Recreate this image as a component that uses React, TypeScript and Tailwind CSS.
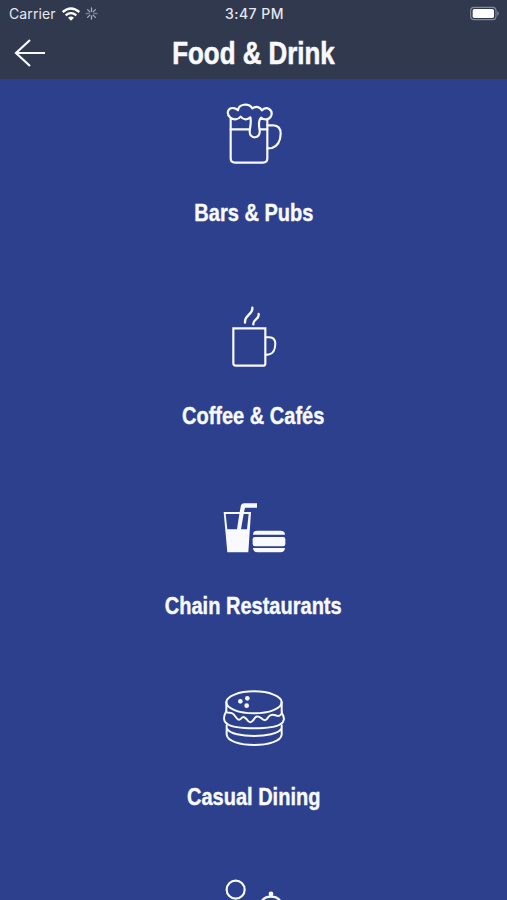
import type { ReactNode } from 'react';

const stroke = {
  fill: 'none',
  stroke: 'currentColor',
  strokeWidth: 6.5,
  strokeLinecap: 'round' as const,
  strokeLinejoin: 'round' as const,
};

function BeerIcon() {
  return (
    <svg viewBox="0 0 240 240" className="mr-px h-20 w-20" {...stroke}>
      <path d="M53 72V190Q53 203 66 203H150Q163 203 163 190V72" />
      <path d="M53 103H110M141 103H163" />
      <path d="M163 91H181Q203 92 203 116Q202 150 177 159L163 160" />
      <path d="M112 67C103 76 91 75 83 65C75 75 61 76 51 67C38 54 46 35 65 40Q72 43 75 46C77 26 107 23 118 40C130 32 141 36 147 46C161 32 180 44 175 61C170 76 153 76 144 68C134 78 138 92 140 107C143 132 110 134 110 110C111 93 116 82 112 67Z" />
    </svg>
  );
}

function CoffeeIcon() {
  return (
    <svg viewBox="0 0 240 240" className="mr-px h-20 w-20" {...stroke}>
      <path d="M61 100H157V206Q157 212 150 212H68Q61 212 61 205Z" strokeLinejoin="miter" />
      <path d="M158 127H169Q187 128 187 147Q186 174 169 178L158 180" strokeWidth="6" />
      <path d="M118 38C121 60 94 58 96 83M137 57C140 73 119 73 121 88" strokeWidth="7" />
    </svg>
  );
}

function ChainIcon() {
  return (
    <svg viewBox="0 0 240 225" className="mr-px h-[75px] w-20" fill="currentColor">
      <path d="M32 66H80L84 46Q86 40 94 40H132V53H96L93 66H114L106 187H43ZM38 72L43 118H72L79 72ZM92 72L84 118H102L107 72Z" fillRule="evenodd" />
      <path d="M120 134Q120 122 134 122H202Q216 122 216 134ZM120 174H216Q215 187 202 187H134Q121 187 120 174Z" />
      <rect x="119" y="141" width="98" height="28" rx="7" />
    </svg>
  );
}

function BurgerIcon() {
  return (
    <svg viewBox="0 0 240 225" className="mr-px h-[75px] w-20" {...stroke} strokeWidth="6">
      <ellipse cx="123" cy="67" rx="83" ry="33" />
      <path d="M40 67V96M206 67V96M40 96C48 101 54 95 62 103C70 112 75 125 84 116C91 108 96 111 102 119C109 130 116 128 122 119C128 108 135 107 144 114C155 124 160 122 166 111C174 99 184 105 191 107C200 110 209 103 206 90" />
      <path d="M39 95C30 112 32 126 43 132C66 149 180 149 203 132C214 126 216 114 207 100" />
      <path d="M41 136V164C45 205 202 205 206 164V136M43 147C58 175 188 175 204 147" />
      <g fill="currentColor" stroke="none">
        <circle cx="82" cy="64" r="7" />
        <circle cx="103" cy="55" r="7" />
        <circle cx="101" cy="77" r="7" />
      </g>
    </svg>
  );
}

function DiningIcon() {
  return (
    <svg viewBox="0 0 240 225" className="mr-px h-[75px] w-20" {...stroke}>
      <circle cx="68" cy="89" r="27" />
      <path d="M142 132Q149 110 174 110Q199 110 206 132" />
      <circle cx="174" cy="101" r="5" fill="currentColor" stroke="none" />
      <circle cx="174" cy="102" r="4" />
    </svg>
  );
}

function Category({ icon, label, className }: { icon: ReactNode; label: string; className: string }) {
  return (
    <button className={`flex w-full shrink-0 flex-col items-center justify-between ${className}`}>
      {icon}
      <span className="origin-center scale-x-[0.817] text-[24.5px] leading-8 font-bold whitespace-nowrap [-webkit-text-stroke:0.4px_#f8faff]">{label}</span>
    </button>
  );
}

export default function App() {
  return (
    <div className="flex h-[900px] w-[507px] flex-col overflow-hidden bg-[#2d408d] font-['Liberation_Sans',Arial,sans-serif] text-[#f8faff]">
      <header className="h-[79px] shrink-0 bg-[#31394e]">
        <div className="grid h-[27px] grid-cols-3 items-center pr-[7px] pl-[9px] font-[Inter,sans-serif] text-[#e5e8ee]">
          <div className="flex items-center">
            <span className="w-[48px] text-[14px] tracking-[0.1px]">Carrier</span>
            <svg viewBox="0 0 60 48" className="ml-[4px] h-4 w-5" fill="none" stroke="#fff" strokeWidth="7">
              <path d="M5 18Q30-3 55 18M14 28Q30 15 46 28" />
              <path d="M21 35Q30 28 39 35L30 44Z" fill="#fff" stroke="none" />
            </svg>
            <svg viewBox="0 0 40 40" className="ml-[4px] h-[13px] w-[13px]" stroke="#a8adb8" strokeWidth="4" strokeLinecap="round">
              <path d="M20 3V13M20 27V37M8 8L15 15M25 25L32 32M8 32L15 25M25 15L32 8" />
              <path d="M3 20H13M27 20H37" stroke="#747c8c" />
            </svg>
          </div>
          <span className="text-center text-[14px] font-medium tracking-[0.45px]">3:47 PM</span>
          <svg viewBox="0 0 93 45" className="h-[15px] w-[31px] justify-self-end">
            <rect x="5" y="4" width="76" height="37" rx="10" fill="none" stroke="#858b9b" strokeWidth="3.5" />
            <rect x="11" y="9" width="64" height="27" rx="5" fill="#fff" />
            <path d="M85 15Q94 22 85 30Z" fill="#858b9b" />
          </svg>
        </div>
        <div className="grid h-[52px] grid-cols-[60px_1fr_60px] items-center">
          <button aria-label="Back" className="pl-[13px]">
            <svg viewBox="0 0 32 30" className="h-[30px] w-8" fill="none" stroke="currentColor" strokeWidth="2.2">
              <path d="M17 2L3 15L17 28M3 15H32" />
            </svg>
          </button>
          <h1 className="mt-[2px] origin-center scale-x-[0.835] text-center text-[31px] leading-9 font-bold whitespace-nowrap [-webkit-text-stroke:0.6px_#f8faff]">Food &amp; Drink</h1>
        </div>
      </header>
      <main className="flex min-h-0 flex-1 flex-col overflow-hidden pt-4">
        <Category icon={<BeerIcon />} label="Bars & Pubs" className="mb-[66px] h-[134px]" />
        <Category icon={<CoffeeIcon />} label="Coffee & Cafés" className="mb-[58px] h-[137px]" />
        <Category icon={<ChainIcon />} label="Chain Restaurants" className="mb-[58px] h-[132px]" />
        <Category icon={<BurgerIcon />} label="Casual Dining" className="mb-[47px] h-[133px]" />
        <div className="flex shrink-0 justify-center">
          <DiningIcon />
        </div>
      </main>
    </div>
  );
}
